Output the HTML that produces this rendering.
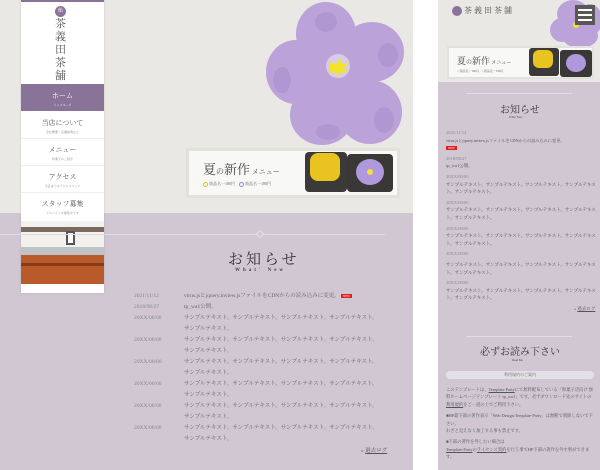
<!DOCTYPE html>
<html><head><meta charset="utf-8">
<style>
*{margin:0;padding:0;box-sizing:border-box}
body{width:600px;height:470px;background:#fff;position:relative;overflow:hidden;font-family:"Liberation Serif","Noto Serif CJK SC",serif;color:#555}
.a{position:absolute}
.t{white-space:nowrap}
</style></head><body>
<!-- DESKTOP -->
<div class="a" style="left:0;top:0;width:413px;height:213px;background:#e9e8e4"></div>
<div class="a" style="left:0;top:213px;width:413px;height:257px;background:#d0c7d3"></div>
<!-- flower -->
<svg class="a" style="left:260px;top:0" width="155" height="150" viewBox="0 0 155 150">
<g fill="#bba3da">
<ellipse cx="66" cy="34" rx="30" ry="32"/>
<ellipse cx="112" cy="52" rx="32" ry="30"/>
<ellipse cx="36" cy="72" rx="30" ry="32"/>
<ellipse cx="62" cy="115" rx="32" ry="30"/>
<ellipse cx="110" cy="112" rx="32" ry="32"/>
<ellipse cx="78" cy="75" rx="42" ry="42"/>
</g>
<g fill="#b097d2">
<ellipse cx="22" cy="80" rx="9" ry="13"/><ellipse cx="68" cy="132" rx="12" ry="8"/><ellipse cx="124" cy="120" rx="10" ry="13"/><ellipse cx="128" cy="55" rx="10" ry="12"/><ellipse cx="66" cy="22" rx="11" ry="10"/>
</g>
<circle cx="78" cy="66" r="12" fill="#d8cbe8"/>
<path d="M70 62l6 2 4-6 2 6 7-1-5 5 4 5-7-1-3 5-2-5-6 1z" fill="#f3e32a"/>
</svg>
<!-- banner -->
<div class="a" style="left:186px;top:148px;width:214px;height:50px;background:#e2e1dc;padding:3px">
<div style="width:100%;height:100%;background:#f8f8f6;position:relative">
<div class="a t" style="left:14px;top:8px;font-size:13px;color:#444">夏<span style="font-size:8px">の</span>新作<span style="font-size:7px"> メニュー</span></div>
<div class="a t" style="left:14px;top:30px;font-size:4px;color:#666"><span style="display:inline-block;width:5px;height:5px;border:1px solid #d8c020;border-radius:50%;vertical-align:middle"></span> 商品名一180円 &nbsp;&nbsp;&nbsp;<span style="display:inline-block;width:5px;height:5px;border:1px solid #9a8ac8;border-radius:50%;vertical-align:middle"></span> 商品名一180円</div>
<div class="a" style="left:116px;top:1px;width:42px;height:40px;background:#3c3a38;border-radius:4px"></div>
<div class="a" style="left:121px;top:2px;width:30px;height:28px;background:#e9c31f;border-radius:8px"></div>
<div class="a" style="left:158px;top:3px;width:46px;height:38px;background:#3a3836;border-radius:4px"></div>
<div class="a" style="left:167px;top:8px;width:28px;height:26px;background:#b098dc;border-radius:50%"></div>
<div class="a" style="left:178px;top:18px;width:6px;height:6px;background:#f0e040;border-radius:50%"></div>
</div></div>
<!-- sidebar -->
<div class="a" style="left:21px;top:0;width:83px;height:293px;background:#fff;box-shadow:0 0 2px rgba(0,0,0,.15)">
<div style="height:2px;background:#8a7398"></div>
<div class="a" style="left:34px;top:6px;width:11px;height:11px;border-radius:50%;background:#8a7398;color:#fff;font-size:5px;text-align:center;line-height:11px">飴</div>
<div class="a" style="left:34px;top:18px;width:12px;font-size:11px;line-height:13px;color:#555">茶<br>義<br>田<br>茶<br>舗</div>
<div class="a" style="left:0;top:84px;width:83px;height:27px;background:#8a7398;color:#fff;text-align:center">
<div style="font-size:7px;margin-top:7px">ホーム</div><div style="font-size:3px;margin-top:2px">トップページ</div></div>
<div class="a" style="left:0;top:112px;width:83px;height:27px;text-align:center;border-bottom:1px solid #eee"><div style="font-size:7px;margin-top:6px">当店について</div><div style="font-size:3px;margin-top:2px;color:#888">会社概要・店舗説明など</div></div>
<div class="a" style="left:0;top:139px;width:83px;height:27px;text-align:center;border-bottom:1px solid #eee"><div style="font-size:7px;margin-top:6px">メニュー</div><div style="font-size:3px;margin-top:2px;color:#888">和菓子のご紹介</div></div>
<div class="a" style="left:0;top:166px;width:83px;height:27px;text-align:center;border-bottom:1px solid #eee"><div style="font-size:7px;margin-top:6px">アクセス</div><div style="font-size:3px;margin-top:2px;color:#888">当店までのアクセスマップ</div></div>
<div class="a" style="left:0;top:193px;width:83px;height:27px;text-align:center"><div style="font-size:7px;margin-top:6px">スタッフ募集</div><div style="font-size:3px;margin-top:2px;color:#888">アルバイトを募集中です</div></div>
<div class="a" style="left:0;top:221px;width:83px;height:63px;background:#f3f1ee;overflow:hidden">
<div class="a" style="left:0;top:6px;width:83px;height:5px;background:#7a6a60"></div>
<div class="a" style="left:0;top:26px;width:83px;height:8px;background:#bfc2c6"></div>
<div class="a" style="left:0;top:34px;width:83px;height:29px;background:#b85a2a"></div>
<div class="a" style="left:0;top:42px;width:83px;height:3px;background:#8a3a1a"></div>
<div class="a" style="left:45px;top:10px;width:9px;height:14px;background:#fff;border:2px solid #555"></div>
</div>
</div>
<!-- news -->
<div class="a" style="left:0;top:234px;width:385px;height:1px;background:#e0dae2"></div>
<div class="a" style="left:257px;top:231px;width:6px;height:6px;border:1px solid #e6e0e8;transform:rotate(45deg);background:#d0c7d3"></div>
<div class="a t" style="left:228px;top:248px;font-size:15px;letter-spacing:3px;color:#333">お知らせ</div>
<div class="a t" style="left:235px;top:268px;font-size:5px;letter-spacing:3px;color:#444;font-weight:bold">What' New</div>
<div class="a" style="left:134px;top:291px;font-size:5.5px;line-height:11px;color:#666;width:270px">
<div style="display:flex"><span style="width:50px;flex:none;color:#888">2021/11/12</span><span>virus.jsとjquery.inview.jsファイルをCDNからの読み込みに変更。 <span style="background:#e02020;color:#fff;font-size:3px;padding:0 2px">NEW</span></span></div>
<div style="display:flex"><span style="width:50px;flex:none;color:#888">2018/08/27</span><span>tp_wa1公開。</span></div>
<div style="display:flex"><span style="width:50px;flex:none;color:#888">20XX/00/00</span><span>サンプルテキスト。サンプルテキスト。サンプルテキスト。サンプルテキスト。<br>サンプルテキスト。</span></div>
<div style="display:flex"><span style="width:50px;flex:none;color:#888">20XX/00/00</span><span>サンプルテキスト。サンプルテキスト。サンプルテキスト。サンプルテキスト。<br>サンプルテキスト。</span></div>
<div style="display:flex"><span style="width:50px;flex:none;color:#888">20XX/00/00</span><span>サンプルテキスト。サンプルテキスト。サンプルテキスト。サンプルテキスト。<br>サンプルテキスト。</span></div>
<div style="display:flex"><span style="width:50px;flex:none;color:#888">20XX/00/00</span><span>サンプルテキスト。サンプルテキスト。サンプルテキスト。サンプルテキスト。<br>サンプルテキスト。</span></div>
<div style="display:flex"><span style="width:50px;flex:none;color:#888">20XX/00/00</span><span>サンプルテキスト。サンプルテキスト。サンプルテキスト。サンプルテキスト。<br>サンプルテキスト。</span></div>
<div style="display:flex"><span style="width:50px;flex:none;color:#888">20XX/00/00</span><span>サンプルテキスト。サンプルテキスト。サンプルテキスト。サンプルテキスト。<br>サンプルテキスト。</span></div>
</div>
<div class="a t" style="left:361px;top:446px;font-size:5.5px;color:#555">» <u>過去ログ</u></div>

<!-- MOBILE -->
<div class="a" style="left:438px;top:0;width:162px;height:82px;background:#e9e8e4"></div>
<div class="a" style="left:438px;top:82px;width:162px;height:388px;background:#d0c7d3"></div>
<svg class="a" style="left:548px;top:0" width="52" height="48" viewBox="0 0 52 48">
<g fill="#bba3da"><ellipse cx="25" cy="14" rx="16" ry="14"/><ellipse cx="42" cy="20" rx="12" ry="16"/><ellipse cx="14" cy="30" rx="12" ry="12"/><ellipse cx="32" cy="36" rx="18" ry="12"/></g>
<circle cx="28" cy="25" r="3" fill="#f3e32a"/></svg>
<div class="a" style="left:452px;top:6px;width:10px;height:10px;border-radius:50%;background:#8a7398"></div>
<div class="a t" style="left:464px;top:5px;font-size:8px;letter-spacing:2px;color:#555">茶義田茶舗</div>
<div class="a" style="left:575px;top:5px;width:20px;height:20px;background:#5a5856;padding:4px 3px">
<div style="height:2px;background:#fff;margin-bottom:3px"></div><div style="height:2px;background:#fff;margin-bottom:3px"></div><div style="height:2px;background:#fff"></div></div>
<div class="a" style="left:447px;top:46px;width:147px;height:33px;background:#f8f8f6;border:2px solid #e2e1dc">
<div class="a t" style="left:8px;top:6px;font-size:9px;color:#444">夏<span style="font-size:6px">の</span>新作<span style="font-size:5px"> メニュー</span></div>
<div class="a t" style="left:8px;top:21px;font-size:3px;color:#666">○ 商品名一180円 &nbsp; ○ 商品名一180円</div>
<div class="a" style="left:80px;top:0;width:30px;height:28px;background:#3c3a38;border-radius:3px"></div>
<div class="a" style="left:84px;top:2px;width:20px;height:18px;background:#e9c31f;border-radius:6px"></div>
<div class="a" style="left:111px;top:2px;width:32px;height:27px;background:#3a3836;border-radius:3px"></div>
<div class="a" style="left:117px;top:6px;width:20px;height:18px;background:#b098dc;border-radius:50%"></div>
</div>
<div class="a" style="left:466px;top:93px;width:106px;height:1px;background:#e2dce4"></div>
<div class="a t" style="left:500px;top:101px;font-size:10px;color:#333">お知らせ</div>
<div class="a t" style="left:509px;top:115px;font-size:3px;color:#444">What' New</div>
<div class="a" style="left:446px;top:129px;width:150px;font-size:4.5px;line-height:7.6px;color:#555">
<div style="color:#888">2021/11/12</div>
<div class="t" style="font-size:4.2px">virus.jsとjquery.inview.jsファイルをCDNからの読み込みに変更。</div>
<div><span style="background:#e02020;color:#fff;font-size:3px;padding:0 2px">NEW</span></div>
<div style="color:#888;margin-top:2px">2018/08/27</div><div>tp_wa1公開。</div>
<div style="color:#888;margin-top:3px">20XX/00/00</div><div>サンプルテキスト。サンプルテキスト。サンプルテキスト。サンプルテキスト。サンプルテキスト。</div>
<div style="color:#888;margin-top:3px">20XX/00/00</div><div>サンプルテキスト。サンプルテキスト。サンプルテキスト。サンプルテキスト。サンプルテキスト。</div>
<div style="color:#888;margin-top:3px">20XX/00/00</div><div>サンプルテキスト。サンプルテキスト。サンプルテキスト。サンプルテキスト。サンプルテキスト。</div>
<div style="color:#888;margin-top:3px">20XX/00/00</div><div style="margin-top:3px">サンプルテキスト。サンプルテキスト。サンプルテキスト。サンプルテキスト。サンプルテキスト。</div>
<div style="color:#888;margin-top:3px">20XX/00/00</div><div>サンプルテキスト。サンプルテキスト。サンプルテキスト。サンプルテキスト。サンプルテキスト。</div>
</div>
<div class="a t" style="left:574px;top:306px;font-size:4.5px;color:#555">» <u>過去ログ</u></div>
<div class="a" style="left:466px;top:336px;width:106px;height:1px;background:#e2dce4"></div>
<div class="a t" style="left:480px;top:343px;font-size:10px;color:#333">必ずお読み下さい</div>
<div class="a t" style="left:512px;top:358px;font-size:3px;color:#444">Read Me</div>
<div class="a" style="left:446px;top:371px;width:148px;height:8px;border-radius:4px;background:#e4dfe6;font-size:4px;text-align:center;line-height:8px;color:#666">利用規約のご案内</div>
<div class="a" style="left:446px;top:386px;width:148px;font-size:4.3px;line-height:7.4px;color:#555">
<p>このテンプレートは、<u>Template Party</u>にて無料配布している「和菓子店向け 無料ホームページテンプレート tp_wa1」です。必ずダウンロード先のサイトの<u>利用規約</u>をご一読の上でご利用下さい。</p>
<p style="margin-top:4px">■HP最下部の著作表示「Web Design:Template-Party」は無断で削除しないで下さい。<br>わざと見えなく加工する事も禁止です。</p>
<p style="margin-top:4px">■下部の著作を外したい場合は<br><u>Template-Party</u>の<u>ライセンス契約</u>を行う事でHP下部の著作を外す事ができます。</p>
</div>
</body></html>
